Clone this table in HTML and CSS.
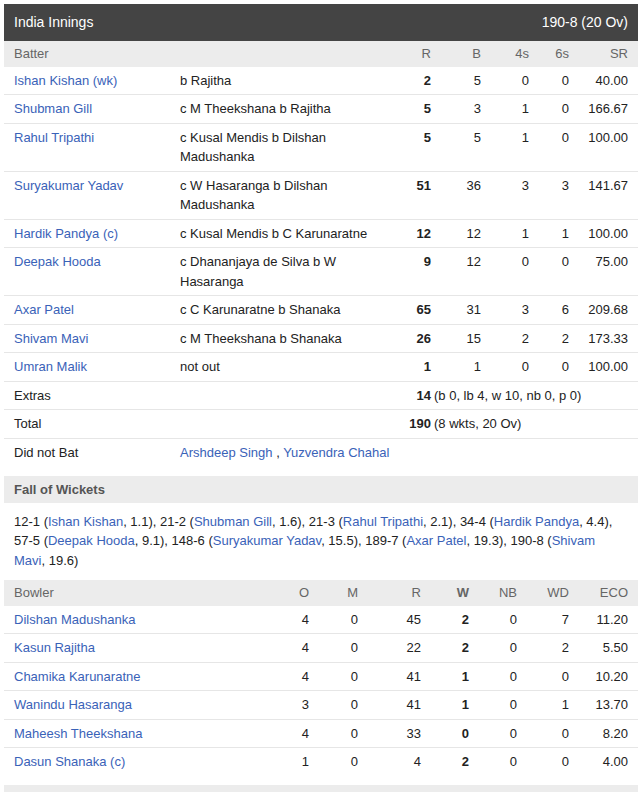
FILE: index.html
```html
<!DOCTYPE html>
<html>
<head>
<meta charset="utf-8">
<link rel="stylesheet" href="styles.css">
</head>
<body>
<div class="card">
  <div class="inn-head"><span>India Innings</span><span>190-8 (20 Ov)</span></div>

  <div class="bat row sub">
    <div>Batter</div><div></div><div class="n">R</div><div class="n">B</div><div class="n">4s</div><div class="n">6s</div><div class="n">SR</div>
  </div>
  <div class="bat row"><a>Ishan Kishan (wk)</a><div>b Rajitha</div><div class="n b">2</div><div class="n">5</div><div class="n">0</div><div class="n">0</div><div class="n">40.00</div></div>
  <div class="bat row"><a>Shubman Gill</a><div>c M Theekshana b Rajitha</div><div class="n b">5</div><div class="n">3</div><div class="n">1</div><div class="n">0</div><div class="n">166.67</div></div>
  <div class="bat row"><a>Rahul Tripathi</a><div>c Kusal Mendis b Dilshan Madushanka</div><div class="n b">5</div><div class="n">5</div><div class="n">1</div><div class="n">0</div><div class="n">100.00</div></div>
  <div class="bat row"><a>Suryakumar Yadav</a><div>c W Hasaranga b Dilshan Madushanka</div><div class="n b">51</div><div class="n">36</div><div class="n">3</div><div class="n">3</div><div class="n">141.67</div></div>
  <div class="bat row"><a>Hardik Pandya (c)</a><div>c Kusal Mendis b C Karunaratne</div><div class="n b">12</div><div class="n">12</div><div class="n">1</div><div class="n">1</div><div class="n">100.00</div></div>
  <div class="bat row"><a>Deepak Hooda</a><div>c Dhananjaya de Silva b W Hasaranga</div><div class="n b">9</div><div class="n">12</div><div class="n">0</div><div class="n">0</div><div class="n">75.00</div></div>
  <div class="bat row"><a>Axar Patel</a><div>c C Karunaratne b Shanaka</div><div class="n b">65</div><div class="n">31</div><div class="n">3</div><div class="n">6</div><div class="n">209.68</div></div>
  <div class="bat row"><a>Shivam Mavi</a><div>c M Theekshana b Shanaka</div><div class="n b">26</div><div class="n">15</div><div class="n">2</div><div class="n">2</div><div class="n">173.33</div></div>
  <div class="bat row"><a>Umran Malik</a><div>not out</div><div class="n b">1</div><div class="n">1</div><div class="n">0</div><div class="n">0</div><div class="n">100.00</div></div>
  <div class="bat row"><div>Extras</div><div></div><div class="n b">14</div><div class="rest">(b 0, lb 4, w 10, nb 0, p 0)</div></div>
  <div class="bat row"><div>Total</div><div></div><div class="n b">190</div><div class="rest">(8 wkts, 20 Ov)</div></div>
  <div class="bat row last"><div>Did not Bat</div><div class="dnb"><a>Arshdeep Singh</a> , <a>Yuzvendra Chahal</a></div></div>

  <div class="sec">Fall of Wickets</div>
  <div class="fow">12-1 (<a>Ishan Kishan</a>, 1.1), 21-2 (<a>Shubman Gill</a>, 1.6), 21-3 (<a>Rahul Tripathi</a>, 2.1), 34-4 (<a>Hardik Pandya</a>, 4.4), 57-5 (<a>Deepak Hooda</a>, 9.1), 148-6 (<a>Suryakumar Yadav</a>, 15.5), 189-7 (<a>Axar Patel</a>, 19.3), 190-8 (<a>Shivam Mavi</a>, 19.6)</div>

  <div class="bowl row sub">
    <div>Bowler</div><div class="n">O</div><div class="n">M</div><div class="n">R</div><div class="n b">W</div><div class="n">NB</div><div class="n">WD</div><div class="n">ECO</div>
  </div>
  <div class="bowl row"><a>Dilshan Madushanka</a><div class="n">4</div><div class="n">0</div><div class="n">45</div><div class="n b">2</div><div class="n">0</div><div class="n">7</div><div class="n">11.20</div></div>
  <div class="bowl row"><a>Kasun Rajitha</a><div class="n">4</div><div class="n">0</div><div class="n">22</div><div class="n b">2</div><div class="n">0</div><div class="n">2</div><div class="n">5.50</div></div>
  <div class="bowl row"><a>Chamika Karunaratne</a><div class="n">4</div><div class="n">0</div><div class="n">41</div><div class="n b">1</div><div class="n">0</div><div class="n">0</div><div class="n">10.20</div></div>
  <div class="bowl row"><a>Wanindu Hasaranga</a><div class="n">3</div><div class="n">0</div><div class="n">41</div><div class="n b">1</div><div class="n">0</div><div class="n">1</div><div class="n">13.70</div></div>
  <div class="bowl row"><a>Maheesh Theekshana</a><div class="n">4</div><div class="n">0</div><div class="n">33</div><div class="n b">0</div><div class="n">0</div><div class="n">0</div><div class="n">8.20</div></div>
  <div class="bowl row last"><a>Dasun Shanaka (c)</a><div class="n">1</div><div class="n">0</div><div class="n">4</div><div class="n b">2</div><div class="n">0</div><div class="n">0</div><div class="n">4.00</div></div>

  <div class="sec next">&nbsp;</div>
</div>
</body>
</html>
```

FILE: styles.css
```css
html, body {
  margin: 0;
  padding: 0;
  background: #fff;
}
body {
  padding: 4px 5px 0 4px;
  font-family: "Liberation Sans", Arial, sans-serif;
  font-size: 13px;
  line-height: 19.5px;
  color: #222;
}
a {
  color: #3a62b8;
  text-decoration: none;
}
.card {
  width: 634px;
}
.inn-head {
  display: flex;
  justify-content: space-between;
  background: #444;
  color: #fff;
  font-size: 14px;
  line-height: 17px;
  padding: 10px;
}
.row {
  display: grid;
  padding: 4px 10px;
  border-bottom: 1px solid #e6e6e6;
}
.row.last {
  border-bottom: none;
}
.bat {
  grid-template-columns: 166px 201px 50px 50px 48px 40px 59px;
}
.bowl {
  grid-template-columns: 246px 49px 49px 63px 48px 48px 52px 59px;
}
.sub {
  background: #ececec;
  color: #666;
  padding: 3px 10px 3px 10px;
  border-bottom: none;
}
.n {
  text-align: right;
}
.b {
  font-weight: bold;
}
.rest {
  grid-column: 4 / -1;
  padding-left: 3px;
  white-space: nowrap;
}
.dnb {
  grid-column: 2 / -1;
}
.sec {
  background: #ececec;
  color: #555;
  font-weight: bold;
  padding: 4px 10px 3px 10px;
  margin-top: 10px;
}
.fow {
  padding: 9px 10px 10px 10px;
}
.sec.next {
  margin-top: 9px;
}
```
